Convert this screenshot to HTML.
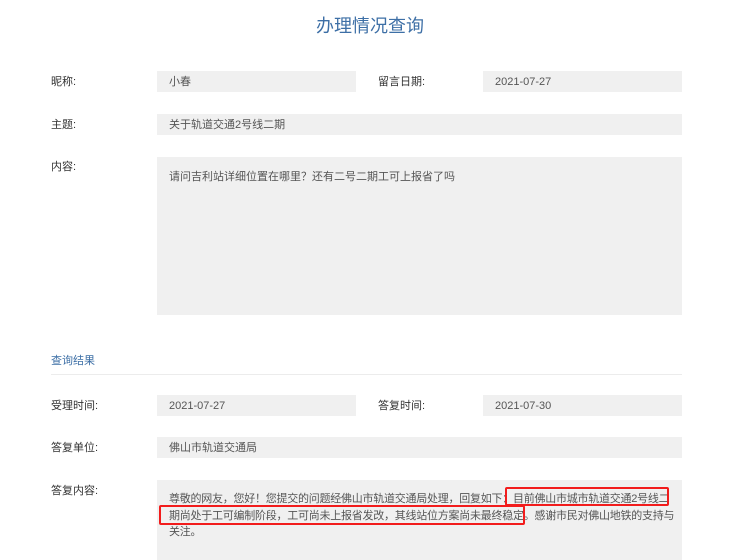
<!DOCTYPE html>
<html><head><meta charset="utf-8"><style>
body{margin:0;width:740px;height:558px;overflow:hidden;background:#fff;font-family:"Liberation Sans","Noto Sans CJK SC",sans-serif;position:relative}
div{position:absolute;box-sizing:border-box}
.t{left:0;width:740px;top:12px;text-align:center;font-size:18px;color:#3d6fa6}
.l{left:51px;font-size:11px;color:#333;line-height:14px}
.b{background:#f0f0f0;font-size:11px;color:#555;padding-left:12px;padding-top:1px;line-height:21px}
.r{border:2px solid #f21c1c;border-radius:2px}
</style></head><body>
<div class="t">办理情况查询</div>
<div class="l" style="top:75px">昵称:</div>
<div class="b" style="left:157px;top:71px;width:199px;height:21px">小春</div>
<div class="l" style="left:378px;top:75px">留言日期:</div>
<div class="b" style="left:483px;top:71px;width:199px;height:21px">2021-07-27</div>
<div class="l" style="top:118px">主题:</div>
<div class="b" style="left:157px;top:114px;width:525px;height:21px">关于轨道交通2号线二期</div>
<div class="l" style="top:160px">内容:</div>
<div class="b" style="left:157px;top:157px;width:525px;height:158px;padding-top:10px">请问吉利站详细位置在哪里？还有二号二期工可上报省了吗</div>
<div style="left:51px;top:352px;font-size:11px;color:#3d6fa6">查询结果</div>
<div style="left:51px;top:374px;width:631px;height:1px;background:#ececec"></div>
<div class="l" style="top:399px">受理时间:</div>
<div class="b" style="left:157px;top:395px;width:199px;height:21px">2021-07-27</div>
<div class="l" style="left:378px;top:399px">答复时间:</div>
<div class="b" style="left:483px;top:395px;width:199px;height:21px">2021-07-30</div>
<div class="l" style="top:441px">答复单位:</div>
<div class="b" style="left:157px;top:437px;width:525px;height:21px">佛山市轨道交通局</div>
<div class="l" style="top:484px">答复内容:</div>
<div class="b" style="left:157px;top:480px;width:525px;height:80px;padding:11px 6px 0 12px;line-height:16.5px;letter-spacing:-0.25px">尊敬的网友，您好！您提交的问题经佛山市轨道交通局处理，回复如下：目前佛山市城市轨道交通2号线二期尚处于工可编制阶段，工可尚未上报省发改，其线站位方案尚未最终稳定。感谢市民对佛山地铁的支持与关注。</div>
<div class="r" style="left:505px;top:487px;width:164px;height:19px"></div>
<div class="r" style="left:159px;top:505px;width:366px;height:20px"></div>
</body></html>
